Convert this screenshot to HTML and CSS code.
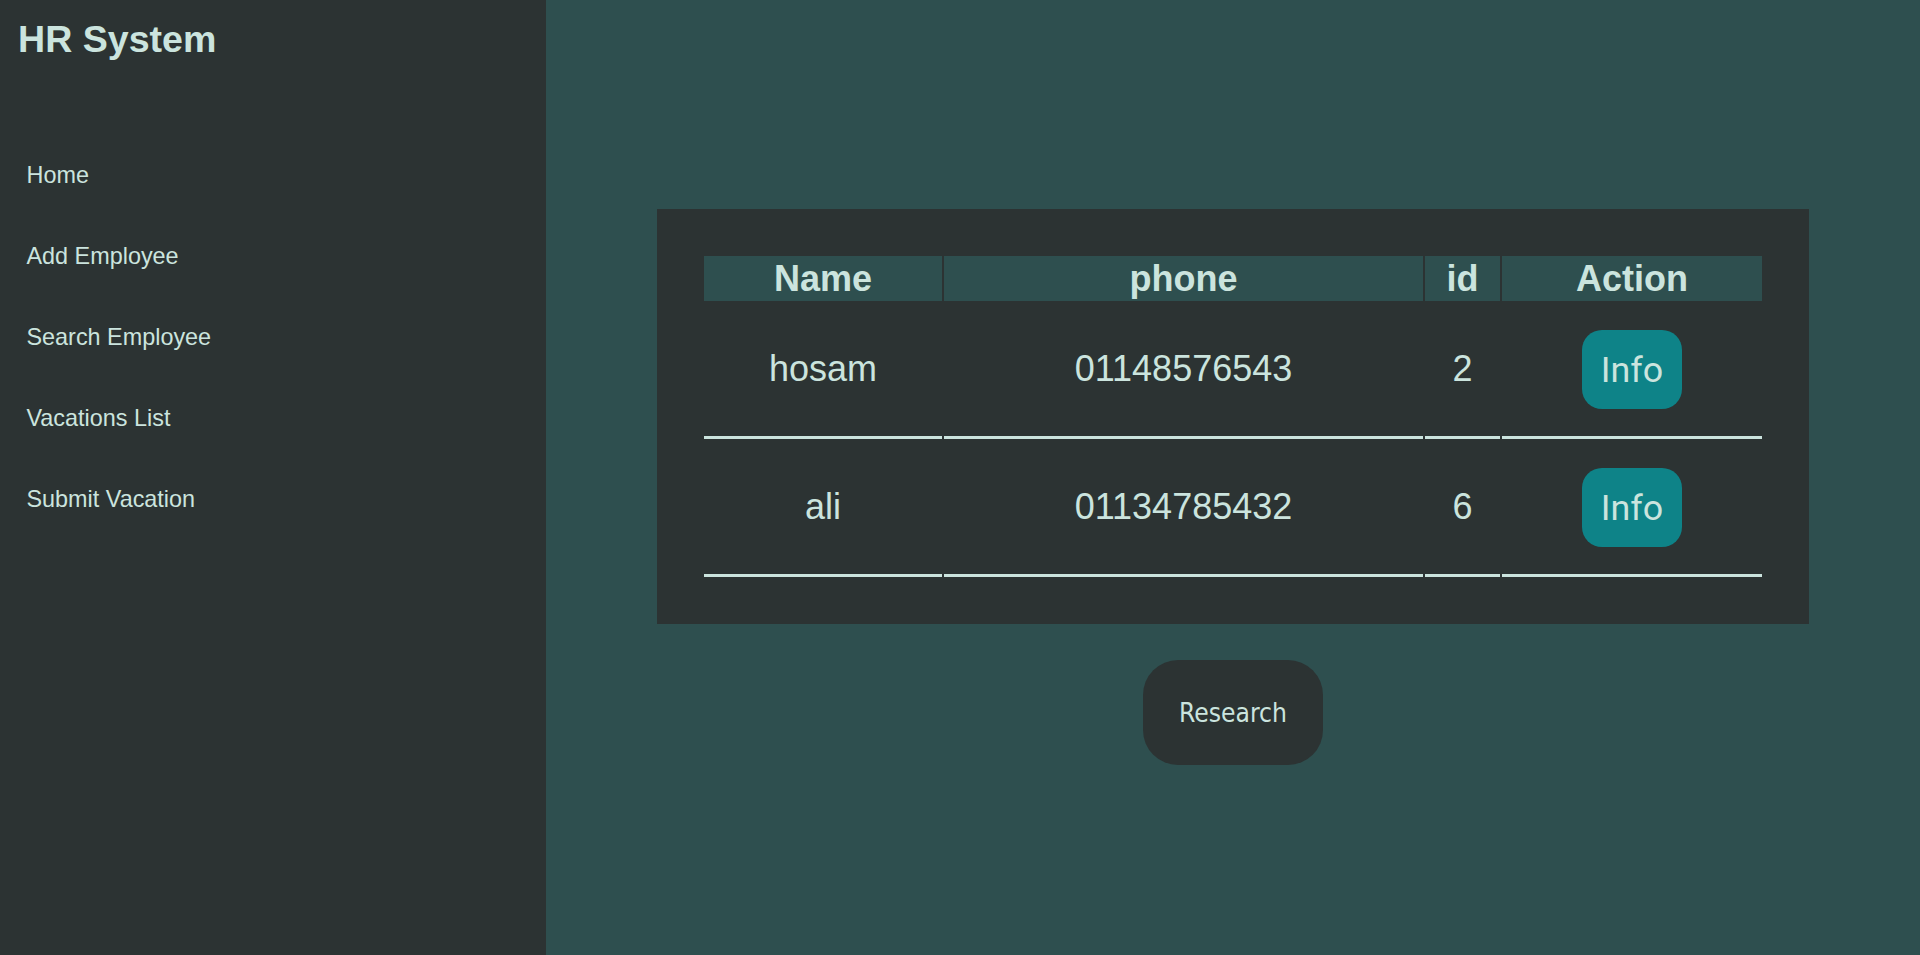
FILE: index.html
```html
<!DOCTYPE html>
<html lang="en">
<head>
<meta charset="utf-8">
<title>HR System</title>
<link rel="stylesheet" href="styles.css">
</head>
<body>
<div class="layout">
  <aside class="sidebar">
    <h1 class="brand">HR System</h1>
    <nav class="nav">
      <a class="nav-link" href="#">Home</a>
      <a class="nav-link" href="#">Add Employee</a>
      <a class="nav-link" href="#">Search Employee</a>
      <a class="nav-link" href="#">Vacations List</a>
      <a class="nav-link" href="#">Submit Vacation</a>
    </nav>
  </aside>
  <main class="main">
    <section class="card">
      <table class="emp-table">
        <colgroup>
          <col class="col-name">
          <col class="col-phone">
          <col class="col-id">
          <col class="col-action">
        </colgroup>
        <thead>
          <tr>
            <th>Name</th>
            <th>phone</th>
            <th>id</th>
            <th>Action</th>
          </tr>
        </thead>
        <tbody>
          <tr>
            <td>hosam</td>
            <td>01148576543</td>
            <td>2</td>
            <td><button class="info-btn">Info</button></td>
          </tr>
          <tr>
            <td>ali</td>
            <td>01134785432</td>
            <td>6</td>
            <td><button class="info-btn">Info</button></td>
          </tr>
        </tbody>
      </table>
    </section>
    <button class="research-btn">Research</button>
  </main>
</div>
</body>
</html>
```
FILE: styles.css
```css
* {
  box-sizing: border-box;
}

html, body {
  margin: 0;
  padding: 0;
  height: 100%;
}

body {
  font-family: "Liberation Sans", Arial, sans-serif;
  color: #CBE4DE;
  background: #2E4F4F;
}

.layout {
  display: flex;
  min-height: 955px;
}

.sidebar {
  width: 546px;
  flex: 0 0 546px;
  background: #2C3333;
  padding: 18px 0 0 18px;
}

.brand {
  margin: 0;
  font-size: 37.6px;
  line-height: 43px;
  font-weight: bold;
  color: #CBE4DE;
}

.nav {
  display: flex;
  flex-direction: column;
  gap: 54px;
  margin-top: 100.7px;
  padding-left: 8.5px;
}

.nav-link {
  font-size: 23.4px;
  line-height: 27px;
  color: #CBE4DE;
  text-decoration: none;
}

.main {
  flex: 1;
  display: flex;
  flex-direction: column;
  align-items: center;
  padding-top: 209px;
  background: #2E4F4F;
}

.card {
  width: 1152px;
  padding: 45px;
  background: #2C3333;
}

.emp-table {
  width: 100%;
  table-layout: fixed;
  border-collapse: separate;
  border-spacing: 2px;
  font-size: 36px;
}

.col-name { width: 238px; }
.col-phone { width: 479px; }
.col-id { width: 75px; }
.col-action { width: 260px; }

.emp-table th {
  background: #2E4F4F;
  height: 44.7px;
  padding: 1px 0 0;
  line-height: 40px;
  font-weight: bold;
  text-align: center;
  vertical-align: middle;
}

.emp-table td {
  height: 136px;
  padding: 0;
  text-align: center;
  vertical-align: middle;
  border-bottom: 3px solid #CBE4DE;
}

.info-btn {
  width: 100px;
  height: 79px;
  border: none;
  border-radius: 20px;
  background: #0E8388;
  color: #CBE4DE;
  font-family: Roboto, "Liberation Sans", sans-serif;
  font-size: 35.8px;
  padding: 2px 0 0;
  cursor: pointer;
}

.research-btn {
  margin-top: 36.3px;
  width: 180px;
  height: 105px;
  border: none;
  border-radius: 35px;
  background: #2C3333;
  color: #CBE4DE;
  font-family: "DejaVu Sans Condensed", "DejaVu Sans", sans-serif;
  font-size: 26.2px;
  padding: 1px 0 0;
  cursor: pointer;
}
```
